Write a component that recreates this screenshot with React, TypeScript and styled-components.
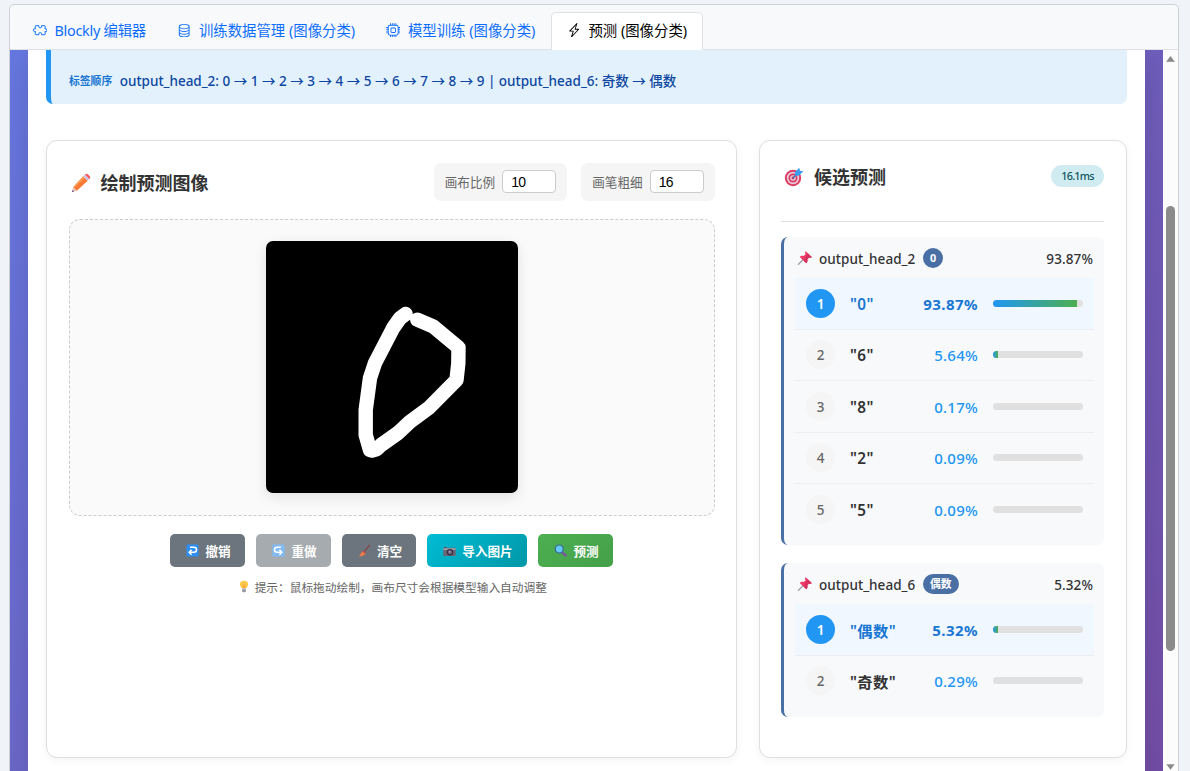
import React from "react";
import styled, { createGlobalStyle, css } from "styled-components";
import { BsDatabase, BsCpu, BsLightningCharge } from "react-icons/bs";

const Global = createGlobalStyle`
  * { box-sizing: border-box; }
  html, body { margin: 0; padding: 0; height: 100%; overflow: hidden; }
  body {
    background: #f0f4f9;
    color: #333;
    font-family: "Noto Sans", "Noto Sans CJK SC", sans-serif;
  }
`;

const Page = styled.div`
  height: 771px;
  width: 1190px;
  padding: 4px 11px 0 9px;
  overflow: hidden;
`;
const Shell = styled.div`
  display: flex;
  flex-direction: column;
  height: 780px;
  border: 1px solid #cdd0d4;
  border-radius: 5px 5px 0 0;
  background: #f8f9fb;
  overflow: hidden;
`;
const TabBar = styled.nav`
  display: flex;
  align-items: flex-end;
  flex: none;
  height: 45px;
  padding-left: 7px;
  border-bottom: 1px solid #dee2e6;
`;
const Tab = styled.a<{ $w: number; $active?: boolean }>`
  display: flex;
  align-items: center;
  flex: none;
  width: ${(p) => p.$w}px;
  height: 38px;
  margin-bottom: -1px;
  padding: 0 0 3px 14.5px;
  gap: 7.5px;
  border: 1px solid transparent;
  border-bottom: 0;
  border-radius: 5px 5px 0 0;
  color: #0d6efd;
  font-size: 14.4px;
  white-space: nowrap;
  svg { flex: none; width: 14.4px; height: 14.4px; }
  ${(p) => p.$active && css`
    color: #000;
    background: #fff;
    border-color: #dee2e6;
  `}
`;
const TabText = styled.span<{ $ls?: number }>`
  margin-bottom: 2px;
  letter-spacing: ${(p) => p.$ls ?? 0}px;
`;
const Viewport = styled.div`
  display: flex;
  flex: 1;
  min-height: 0;
`;
const Backdrop = styled.div`
  flex: 1;
  display: flex;
  padding: 0 18px;
  overflow: hidden;
  background: linear-gradient(135deg, #667eea 0%, #764ba2 100%) 0 -227px / 1153px 1128px no-repeat;
`;
const Sheet = styled.main`
  flex: 1;
  height: 760px;
  padding: 0 18px;
  background: #fff;
  box-shadow: 0 0 36px rgba(0, 0, 0, 0.15);
`;
const Scrollbar = styled.div`
  display: flex;
  flex-direction: column;
  align-items: center;
  width: 15px;
  height: 721px;
  padding: 6px 0 1px;
  background: #fcfcfc;
  svg { display: block; flex: none; }
`;
const Thumb = styled.div`
  width: 9px;
  height: 445px;
  margin: 144px 0 auto;
  border-radius: 5px;
  background: #8b8b8b;
`;

const LabelOrder = styled.section`
  display: flex;
  align-items: center;
  height: 54px;
  padding: 6px 0 0 18px;
  gap: 7.5px;
  border-left: 5px solid #2196f3;
  border-radius: 0 0 7px 7px;
  background: #e3f1fc;
`;
const OrderTitle = styled.span`
  color: #1976d2;
  font-size: 10.8px;
  font-weight: 600;
`;
const OrderText = styled.span`
  color: #0d47a1;
  font-size: 13.5px;
  font-weight: 550;
  letter-spacing: 0;
  white-space: pre;
`;
const Columns = styled.div`
  display: flex;
  gap: 22px;
  margin-top: 36px;
  height: 618px;
`;
const Card = styled.section<{ $w: number; $narrow?: boolean }>`
  width: ${(p) => p.$w}px;
  padding: ${(p) => (p.$narrow ? "22px 22px 22px 21px" : "22px 21.5px")};
  border: 1px solid #dedfe1;
  border-radius: 11px;
  background: #fff;
  box-shadow: 0 2px 9px rgba(0, 0, 0, 0.05);
`;
const DrawHead = styled.header`
  display: flex;
  align-items: center;
  height: 38px;
  padding-left: 2px;
  h3 { padding-top: 2px; }
`;
const Title = styled.h3`
  display: flex;
  align-items: center;
  margin: 0 auto 0 0;
  gap: 10px;
  font-size: 18px;
  line-height: 26px;
  font-weight: 600;
`;
const Control = styled.label`
  display: flex;
  align-items: center;
  width: 133.5px;
  height: 38px;
  margin-left: 14px;
  padding: 0 0 1px 11.2px;
  gap: 7.3px;
  border-radius: 7px;
  background: #f5f5f5;
  color: #666;
  font-size: 12.6px;
`;
const NumberInput = styled.input`
  width: 54px;
  height: 23px;
  padding: 0 8px;
  border: 1px solid #ccc;
  border-radius: 4px;
  color: #000;
  background: #fff;
  font: 14px "Liberation Sans", Arial, sans-serif;
  letter-spacing: -0.8px;
`;
const CanvasArea = styled.div`
  display: flex;
  justify-content: center;
  align-items: center;
  height: 297px;
  margin-top: 18px;
  border: 1px dashed #ccc;
  border-radius: 11px;
  background: #fafafa;
`;
const Drawing = styled.svg`
  display: block;
  width: 252px;
  height: 252px;
  margin-top: -1px;
  border-radius: 7px;
  background: #000;
  box-shadow: 0 4px 13px rgba(0, 0, 0, 0.1);
`;
const Actions = styled.div`
  display: flex;
  justify-content: center;
  gap: 11px;
  margin-top: 18px;
`;
const Button = styled.button<{ $w: number; $bg: string }>`
  display: flex;
  align-items: center;
  justify-content: center;
  width: ${(p) => p.$w}px;
  height: 33px;
  padding: 0 0 0 2px;
  gap: 6px;
  border: 0;
  border-radius: 5px;
  background: ${(p) => p.$bg};
  color: #fff;
  font: 600 12.6px "Noto Sans", "Noto Sans CJK SC", sans-serif;
  &:disabled { opacity: 0.6; }
`;
const Hint = styled.p`
  display: flex;
  align-items: center;
  justify-content: center;
  gap: 5px;
  height: 18px;
  margin: 10px 0 0;
  padding-left: 1.500px;
  color: #666;
  font-size: 11.7px;
`;

const ResultHead = styled.header`
  display: flex;
  align-items: center;
  height: 59px;
  padding: 0 0 32px 3px;
  border-bottom: 1px solid #dedfe1;
  h3 { padding-top: 2px; }
`;
const Timing = styled.span`
  width: 53px;
  height: 22px;
  border-radius: 11px;
  background: #d1ecf1;
  color: #0c5460;
  font-size: 10.8px;
  font-weight: 500;
  letter-spacing: -0.75px;
  line-height: 22px;
  text-align: center;
`;
const Group = styled.section<{ $h: number; $top: number }>`
  height: ${(p) => p.$h}px;
  margin-top: ${(p) => p.$top}px;
  padding: 0 10px 0 11px;
  border-left: 3px solid #4a6fa5;
  border-radius: 7px;
  background: #f8f9fb;
`;
const GroupHead = styled.header`
  display: flex;
  align-items: center;
  height: 41.4px;
  padding: 0 1px 0 2px;
  font-size: 13.5px;
  font-weight: 500;
`;
const HeadName = styled.span`
  margin: 3px 8px 0 6px;
  width: 96px;
  letter-spacing: 0.05px;
  white-space: nowrap;
`;
const Winner = styled.span`
  min-width: 20px;
  height: 20px;
  padding: 0 7px;
  border-radius: 10px;
  background: #4a6fa5;
  color: #fff;
  font-size: 10.8px;
  font-weight: 700;
  line-height: 20px;
  text-align: center;
`;
const HeadScore = styled.span`
  margin: 3px 0 0 auto;
  letter-spacing: 0.1px;
`;
const Row = styled.div<{ $first?: boolean; $last?: boolean }>`
  display: flex;
  align-items: center;
  height: 51.4px;
  padding-left: 11px;
  border-bottom: 1px solid ${(p) => (p.$last ? "transparent" : "#eceef0")};
  background: ${(p) => (p.$first ? "#f0f7ff" : "transparent")};
  color: ${(p) => (p.$first ? "#1976d2" : "#333")};
`;
const Rank = styled.span<{ $first?: boolean }>`
  flex: none;
  width: 29px;
  height: 29px;
  border-radius: 50%;
  background: ${(p) => (p.$first ? "#2196f3" : "#f5f5f5")};
  color: ${(p) => (p.$first ? "#fff" : "#666")};
  font-size: 13.5px;
  font-weight: ${(p) => (p.$first ? 600 : 500)};
  line-height: 31px;
  text-align: center;
`;
const Label = styled.span`
  margin: 1px 0 0 15px;
  font-size: 15.3px;
  font-weight: 600;
  letter-spacing: 0.4px;
`;
const Score = styled.span<{ $first?: boolean }>`
  margin: 1px 15px 0 auto;
  color: ${(p) => (p.$first ? "#1976d2" : "#2196f3")};
  font-size: 15px;
  font-weight: ${(p) => (p.$first ? 700 : 500)};
  letter-spacing: ${(p) => (p.$first ? 0.45 : 0.25)}px;
`;
const Meter = styled.div`
  flex: none;
  width: 90px;
  height: 7px;
  margin-right: 11px;
  border-radius: 4px;
  background: #e0e0e0;
  overflow: hidden;
`;
const MeterFill = styled.div`
  height: 100%;
  background: linear-gradient(90deg, #2196f3, #4caf50);
`;
const Glyph = styled.svg`
  display: block;
  flex: none;
`;

const Puzzle = () => (
  <Glyph width="14.4" height="14.4" viewBox="0 0 16 16">
    <path
      d="M3.200 3H6.500V4.300Q6.500 5.300 8 5.300T9.500 4.300V3h3.300q.9 0 .8.900L13.300 6.500h1.200q1 0 1 1.500t-1 1.500h-1.200l.3 2.600q.1.900-.8.900H9.500v-1.300Q9.500 10.700 8 10.700T6.500 11.700V13H3.200q-.9 0-.8-.9l.3-2.600H1.500q-1 0-1-1.500t1-1.500h1.200L2.400 3.900Q2.300 3 3.200 3z"
      fill="none" stroke="currentColor" strokeWidth="1.100" strokeLinejoin="round"
    />
  </Glyph>
);
const Pencil = () => (
  <Glyph width="20" height="20" viewBox="0 0 20 20">
    <path d="M2.2 14.2 1 19l4.900-1.200z" fill="#e3c3bd" />
    <path d="M1.500 17 1 19l2.100-.5z" fill="#693c64" />
    <path d="M2.200 14.200 12.200 3.300l4.500 4.500L5.900 17.800z" fill="#f97a36" />
    <path d="m2.200 14.200 1.600.1L13.700 4.700l-1.500-1.400z" fill="#ff9c55" />
    <path d="m12.200 3.300 1.800-1.700 4.500 4.500-1.800 1.700z" fill="#cbc3e4" />
    <path d="m14 1.600.8-.7c1.500-.6 4.900 2.700 4.300 4.400l-.6.800z" fill="#f84e53" />
  </Glyph>
);
const Target = () => (
  <Glyph width="20" height="20" viewBox="0 0 20 20">
    <circle cx="9" cy="11" r="8.200" fill="#df3c62" />
    <circle cx="9" cy="11" r="6.200" fill="#e4cddd" />
    <circle cx="9" cy="11" r="4.500" fill="#df3c62" />
    <circle cx="9" cy="11" r="2.800" fill="#e4cddd" />
    <circle cx="9" cy="11" r="1.400" fill="#c93765" />
    <path d="m9 11 6.500-6.500" stroke="#2675b9" strokeWidth="1.200" />
    <path d="m10.800 5.300 4.500-4.600.7 3 3.400.5-4.500 4.500-3.400-.3z" fill="#3b9df1" />
  </Glyph>
);
const Pin = () => (
  <Glyph width="16" height="16" viewBox="0 0 16 16">
    <path d="m6.500 9.300-5.500 5.500" stroke="#a4a1ac" strokeWidth="1.400" />
    <path d="m8.700 1.300 6 5.700c-.6 1-1.900 1.100-2.700.5l-1.700 2c.5 1.500.1 2.700-1 3.700L2.700 7c1-1.200 2.400-1.500 3.900-.9l2-1.900c-.7-.9-.8-2.100.1-2.900z" fill="#ed3a65" />
    <path d="m10.700 3.200 4 3.800c-.6 1-1.900 1.100-2.700.5l-1.700 2c.5 1.500.1 2.700-1 3.700L6.700 10.700 8 8.200z" fill="#d5315e" />
  </Glyph>
);
const Undo = ({ flip }: { flip?: boolean }) => (
  <Glyph width="13" height="13" viewBox="0 0 13 13">
    <rect x=".5" y=".5" width="12" height="12" rx="1" fill="#2d8ff5" />
    <g transform={flip ? "translate(13 0) scale(-1 1)" : undefined} fill="none" stroke="#fff" strokeWidth="1.500">
      <path d="M4 3.300h4a2.500 2.500 0 0 1 0 5H3.700" />
      <path d="m5.600 5.900-2.400 2.400 2.400 2.400" />
    </g>
  </Glyph>
);
const Broom = () => (
  <Glyph width="13" height="13" viewBox="0 0 13 13">
    <path d="M11.700.8 6.500 7.500" stroke="#8d3b3d" strokeWidth="1.100" />
    <path d="M4.300 7.300 7.300 9.500c-.5 1.600-2 2.700-6.500 3C2.600 11 3 8.700 4.300 7.300z" fill="#ef7b48" />
    <path d="m4.900 6.700 2.800 2.100-.5.900-3-2.200z" fill="#d44339" />
  </Glyph>
);
const Camera = () => (
  <Glyph width="13" height="13" viewBox="0 0 13 13">
    <path d="M1.500 3h2v1h-2z" fill="#443b4d" />
    <rect x=".3" y="3.800" width="12.400" height="8.200" rx=".6" fill="#6c6574" />
    <path d="M.3 4.400h12.400v1.500H.3z" fill="#aaa4af" />
    <circle cx="7" cy="8.200" r="3.200" fill="#352e40" />
    <circle cx="7" cy="8.200" r="2" fill="#75708a" />
    <circle cx="6.500" cy="7.500" r=".7" fill="#b4aec6" />
  </Glyph>
);
const Magnifier = () => (
  <Glyph width="13" height="13" viewBox="0 0 13 13">
    <path d="m8.300 8.500 3.400 3" stroke="#79579b" strokeWidth="2.500" strokeLinecap="round" />
    <circle cx="5.200" cy="5" r="4" fill="#64c9f3" stroke="#376a98" strokeWidth="1.200" />
  </Glyph>
);
const Bulb = () => (
  <Glyph width="12" height="13" viewBox="0 0 12 13">
    <path d="M6 .7c-5.300 0-4.800 4.900-2.200 7.600h4.400C10.800 5.600 11.300.7 6 .7z" fill="#ffc94d" />
    <path d="M5 4.300 5.700 8h.8L7 4.300" fill="none" stroke="#f29a37" strokeWidth=".7" />
    <path d="M4.100 8.500h3.800v2.400c0 1.800-3.800 1.800-3.800 0z" fill="#9994a4" />
    <path d="M4.100 9.400h3.800" stroke="#c8c4d0" strokeWidth=".6" />
  </Glyph>
);

type Candidate = { label: string; score: string; fill: number };
type Head = { name: string; winner: string; score: string; height: number; top: number; items: Candidate[] };

const heads: Head[] = [
  {
    name: "output_head_2", winner: "0", score: "93.87%", height: 308, top: 15,
    items: [
      { label: "0", score: "93.87%", fill: 93.87 },
      { label: "6", score: "5.64%", fill: 5.64 },
      { label: "8", score: "0.17%", fill: 0.17 },
      { label: "2", score: "0.09%", fill: 0.09 },
      { label: "5", score: "0.09%", fill: 0.09 },
    ],
  },
  {
    name: "output_head_6", winner: "偶数", score: "5.32%", height: 154, top: 18,
    items: [
      { label: "偶数", score: "5.32%", fill: 5.32 },
      { label: "奇数", score: "0.29%", fill: 0.29 },
    ],
  },
];

export default function App() {
  return (
    <Page lang="zh-CN">
      <Global />
      <Shell>
        <TabBar>
          <Tab $w={144.5}><Puzzle /><TabText $ls={-0.25}>Blockly 编辑器</TabText></Tab>
          <Tab $w={209}><BsDatabase /><TabText>训练数据管理 (图像分类)</TabText></Tab>
          <Tab $w={180.5}><BsCpu /><TabText>模型训练 (图像分类)</TabText></Tab>
          <Tab $w={152} $active><BsLightningCharge /><TabText>预测 (图像分类)</TabText></Tab>
        </TabBar>
        <Viewport>
          <Backdrop>
            <Sheet>
              <LabelOrder>
                <OrderTitle>标签顺序</OrderTitle>
                <OrderText>output_head_2: 0 → 1 → 2 → 3 → 4 → 5 → 6 → 7 → 8 → 9 | output_head_6: 奇数 → 偶数</OrderText>
              </LabelOrder>
              <Columns>
                <Card $w={691}>
                  <DrawHead>
                    <Title><Pencil />绘制预测图像</Title>
                    <Control>画布比例<NumberInput defaultValue="10" /></Control>
                    <Control>画笔粗细<NumberInput defaultValue="16" /></Control>
                  </DrawHead>
                  <CanvasArea>
                    <Drawing viewBox="0 0 252 252">
                      <path
                        d="M151.300 78.700 167 85.300 192.500 106.500 192.300 122.500 190.500 139 163 166.700 144 180.700 132 192 115 204 111 208 106 209.500 104 209 99.700 194V169L104 137 109 122 127.300 86.700 134 77.300 139.700 73"
                        fill="none" stroke="#fff" strokeWidth="14.400" strokeLinecap="round" strokeLinejoin="round"
                      />
                    </Drawing>
                  </CanvasArea>
                  <Actions>
                    <Button $w={75} $bg="#6c757d"><Undo />撤销</Button>
                    <Button $w={75} $bg="#6c757d" disabled><Undo flip />重做</Button>
                    <Button $w={74} $bg="#6c757d"><Broom />清空</Button>
                    <Button $w={100} $bg="linear-gradient(135deg, #00bcd4, #0097a7)"><Camera />导入图片</Button>
                    <Button $w={75} $bg="linear-gradient(135deg, #4caf50, #45a049)"><Magnifier />预测</Button>
                  </Actions>
                  <Hint><Bulb />提示：鼠标拖动绘制，画布尺寸会根据模型输入自动调整</Hint>
                </Card>
                <Card $w={368} $narrow>
                  <ResultHead>
                    <Title><Target />候选预测</Title>
                    <Timing>16.1ms</Timing>
                  </ResultHead>
                  {heads.map((h) => (
                    <Group key={h.name} $h={h.height} $top={h.top}>
                      <GroupHead>
                        <Pin />
                        <HeadName>{h.name}</HeadName>
                        <Winner>{h.winner}</Winner>
                        <HeadScore>{h.score}</HeadScore>
                      </GroupHead>
                      {h.items.map((c, i) => (
                        <Row key={c.label} $first={i === 0} $last={i === h.items.length - 1}>
                          <Rank $first={i === 0}>{i + 1}</Rank>
                          <Label>"{c.label}"</Label>
                          <Score $first={i === 0}>{c.score}</Score>
                          <Meter><MeterFill style={{ width: `${c.fill}%` }} /></Meter>
                        </Row>
                      ))}
                    </Group>
                  ))}
                </Card>
              </Columns>
            </Sheet>
          </Backdrop>
          <Scrollbar>
            <svg width="9" height="6" viewBox="0 0 9 6"><path d="M4.500.2 8.600 5.800H.4z" fill="#8b8b8b" stroke="#8b8b8b" strokeWidth=".4" /></svg>
            <Thumb />
            <svg width="9" height="6" viewBox="0 0 9 6"><path d="M4.500 5.800 8.600.2H.4z" fill="#8b8b8b" /></svg>
          </Scrollbar>
        </Viewport>
      </Shell>
    </Page>
  );
}
